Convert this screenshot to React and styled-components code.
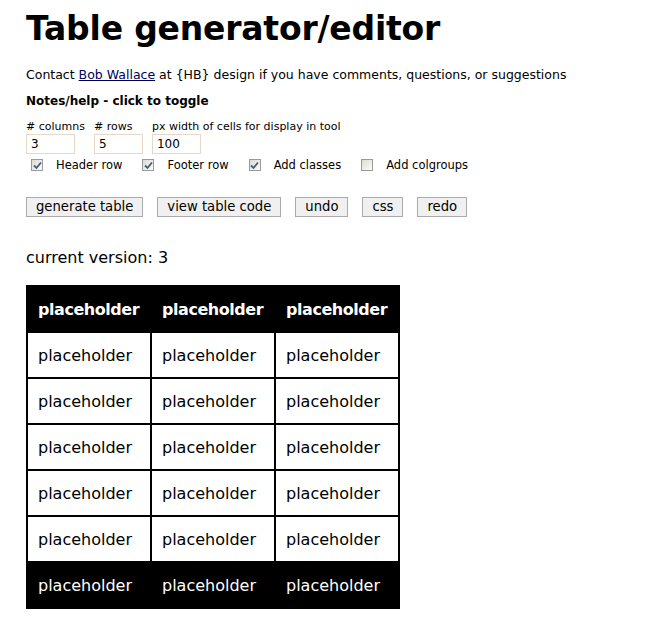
import React from 'react'
import styled, {createGlobalStyle} from 'styled-components'

var GlobalStyle = createGlobalStyle`
  body {
    margin: 0;
    background: white;
    color: black;
    font-family: "DejaVu Sans", Verdana, sans-serif;
  }
`

var Page = styled.div`
  padding: 8px 26px 20px 26px;
`

var Title = styled.h1`
  margin: 0;
  font-size: 33px;
  font-weight: bold;
  line-height: 42px;
  letter-spacing: -0.2px;
`

var Contact = styled.p`
  margin: 17px 0 0 0;
  font-size: 12.5px;
  line-height: 16px;
  a {
    color: #00005a;
    text-decoration: underline;
  }
`

var Notes = styled.div`
  margin-top: 10px;
  font-size: 12px;
  font-weight: bold;
  line-height: 16px;
  cursor: pointer;
`

var Fields = styled.div`
  margin-top: 11px;
  display: flex;
  align-items: flex-start;
  gap: 9px;
`

var Field = styled.label`
  display: flex;
  flex-direction: column;
  font-size: 11px;
  line-height: 14px;
`

var Input = styled.input`
  box-sizing: border-box;
  width: ${p => p.w}px;
  height: 20px;
  margin: 0;
  padding: 0 4px;
  border: 1px solid #e8d8c8;
  font-family: "DejaVu Sans", Verdana, sans-serif;
  font-size: 12px;
  outline: none;
`

var Checks = styled.div`
  display: flex;
  align-items: center;
  margin-top: 4px;
  padding-left: 5px;
`

var Check = styled.label`
  display: flex;
  align-items: center;
  font-size: 11.5px;
  margin-right: 20px;
`

var Box = styled.span`
  box-sizing: border-box;
  width: 12px;
  height: 12px;
  border: 1px solid #9a9a9a;
  background: linear-gradient(135deg, #dcdcd6, #fbfbf8);
  display: inline-flex;
  align-items: center;
  justify-content: center;
  margin-right: 13px;
`

var Buttons = styled.div`
  display: flex;
  gap: 14px;
  margin-top: 25px;
`

var Button = styled.button`
  height: 20px;
  padding: 0 9px;
  margin: 0;
  background: #f0f0f0;
  border: 1px solid #aaaaaa;
  border-radius: 0;
  font-family: "DejaVu Sans", Verdana, sans-serif;
  font-size: 13.2px;
  line-height: 18px;
  color: #000;
`

var Version = styled.div`
  margin-top: 31px;
  font-size: 16px;
  line-height: 20px;
`

var Table = styled.table`
  margin-top: 17px;
  border-collapse: collapse;
  background: black;
  border: 2px solid black;
`

var Cell = styled.td`
  width: 102px;
  height: 44px;
  padding: 0 10px;
  border: 2px solid black;
  background: ${p => p.dark ? 'black' : 'white'};
  color: ${p => p.dark ? 'white' : 'black'};
  font-size: 16px;
  font-weight: ${p => p.bold ? 'bold' : 'normal'};
  letter-spacing: ${p => p.bold ? '-0.45px' : '0'};
  text-align: left;
  white-space: nowrap;
`

function CheckItem ({checked, children}) {
  return (
    <Check>
      <Box>
        {checked &&
          <svg width='9' height='9' viewBox='0 0 9 9'>
            <path d='M1 4.5 L3.5 7 L8 1.5' fill='none' stroke='#4a5a78' strokeWidth='1.8' />
          </svg>
        }
      </Box>
      {children}
    </Check>
  )
}

var cols = [0, 1, 2]
var rows = [0, 1, 2, 3, 4]

export default function App () {
  return (
    <Page>
      <GlobalStyle />
      <Title>Table generator/editor</Title>
      <Contact>
        Contact <a href='#'>Bob Wallace</a> at {'{HB}'} design if you have comments, questions, or suggestions
      </Contact>
      <Notes>Notes/help - click to toggle</Notes>
      <Fields>
        <Field># columns<Input w={49} defaultValue='3' /></Field>
        <Field># rows<Input w={49} defaultValue='5' /></Field>
        <Field>px width of cells for display in tool<Input w={49} defaultValue='100' /></Field>
      </Fields>
      <Checks>
        <CheckItem checked>Header row</CheckItem>
        <CheckItem checked>Footer row</CheckItem>
        <CheckItem checked>Add classes</CheckItem>
        <CheckItem>Add colgroups</CheckItem>
      </Checks>
      <Buttons>
        <Button>generate table</Button>
        <Button>view table code</Button>
        <Button>undo</Button>
        <Button>css</Button>
        <Button>redo</Button>
      </Buttons>
      <Version>current version: 3</Version>
      <Table>
        <thead>
          <tr>
            {cols.map(c => <Cell as='th' key={c} dark bold>placeholder</Cell>)}
          </tr>
        </thead>
        <tbody>
          {rows.map(r => (
            <tr key={r}>
              {cols.map(c => <Cell key={c}>placeholder</Cell>)}
            </tr>
          ))}
        </tbody>
        <tfoot>
          <tr>
            {cols.map(c => <Cell key={c} dark>placeholder</Cell>)}
          </tr>
        </tfoot>
      </Table>
    </Page>
  )
}
